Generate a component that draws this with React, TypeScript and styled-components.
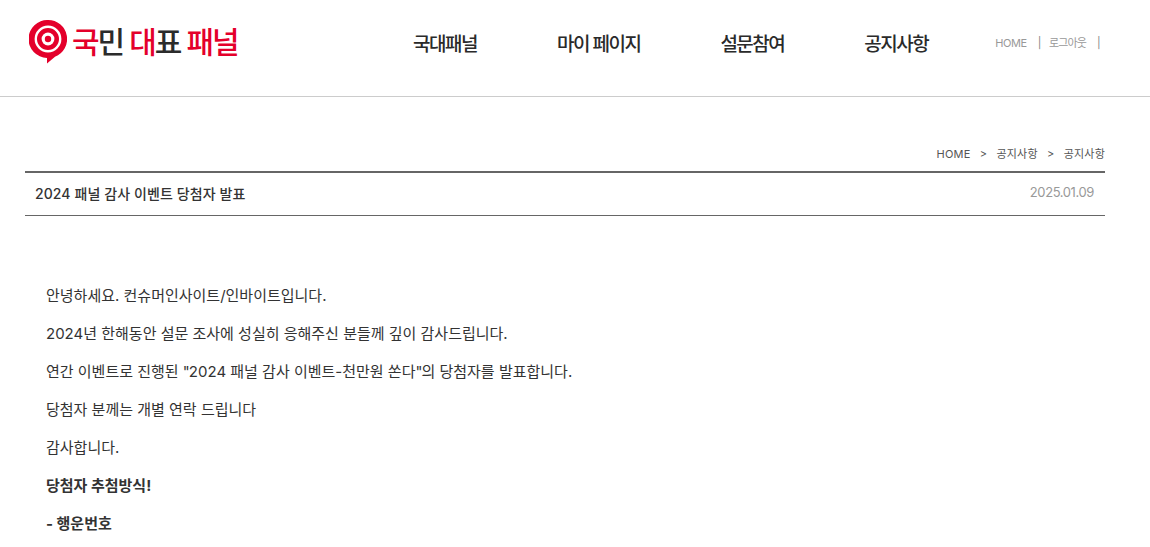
import styled, { createGlobalStyle } from 'styled-components'

const GlobalStyle = createGlobalStyle`
  html, body {
    margin: 0;
    padding: 0;
    height: 100%;
    overflow: hidden;
    background: #fff;
    font-family: Inter, 'Noto Sans CJK KR', sans-serif;
  }
`

const Header = styled.header`
  display: flex;
  align-items: flex-start;
  height: 96px;
  border-bottom: 1px solid #ccc;
`

const Logo = styled.div`
  display: flex;
  align-items: center;
  gap: 5px;
  width: 413px;
  padding: 20px 0 0 29px;
  box-sizing: border-box;
`

const LogoText = styled.div`
  font-size: 30px;
  line-height: 42px;
  font-weight: 500;
  letter-spacing: -2px;
  white-space: nowrap;
  color: #e4002b;
`

const Dark = styled.span`
  color: #2b2b2b;
`

const Nav = styled.nav`
  display: flex;
  gap: 80px;
  padding-top: 31px;
`

const NavItem = styled.a`
  font-size: 19px;
  line-height: 28px;
  font-weight: 500;
  letter-spacing: -1.5px;
  color: #2a2a2a;
`

const Util = styled.div`
  display: flex;
  align-items: center;
  margin-left: 67px;
  padding-top: 35px;
  font-size: 11px;
  line-height: 16px;
  letter-spacing: -0.4px;
  color: #999;
`

const UtilKo = styled.span`
  letter-spacing: -0.9px;
`

const Sep = styled.span`
  margin: 0 8px 0 11px;
  color: #888;
`

const Main = styled.main`
  width: 1080px;
  margin-left: 25px;
`

const Crumbs = styled.div`
  display: flex;
  justify-content: flex-end;
  gap: 9.25px;
  padding-top: 49px;
  height: 25px;
  font-size: 11px;
  line-height: 16px;
  letter-spacing: 0.2px;
  color: #555;
`

const TitleRow = styled.div`
  display: flex;
  align-items: center;
  justify-content: space-between;
  height: 42px;
  padding: 0 10px;
  border-top: 2px solid #666;
  border-bottom: 1px solid #666;
`

const Title = styled.h1`
  margin: 0 0 2px;
  font-size: 14px;
  font-weight: 500;
  letter-spacing: 0.1px;
  color: #333;
`

const DateText = styled.span`
  margin: 0 1px 4px 0;
  font-size: 13px;
  letter-spacing: -0.4px;
  color: #999;
`

const Body = styled.div`
  padding: 70px 0 0 21px;
`

const Para = styled.p<{ $bold?: boolean }>`
  margin: 0 0 19px;
  font-size: 15px;
  line-height: 19px;
  color: #333;
  font-weight: ${(p) => (p.$bold ? 700 : 400)};
`

const Quote = styled.span`
  letter-spacing: -1px;
`

const App = () => {
  return (
    <>
      <GlobalStyle />
      <Header>
        <Logo>
          <svg width="38" height="44" viewBox="0 0 38 44">
            <path
              d="M19 0a19 19 0 0 1 7 36.7L18 43.5v-5.5A19 19 0 0 1 19 0z"
              fill="#e4002b"
            />
            <circle cx="19" cy="19" r="12.2" fill="none" stroke="#fff" strokeWidth="2.4" />
            <circle cx="19" cy="19" r="6.4" fill="#fff" />
            <circle cx="19" cy="19" r="3.2" fill="#e4002b" />
          </svg>
          <LogoText>
            국<Dark>민</Dark> 대<Dark>표</Dark> 패널
          </LogoText>
        </Logo>
        <Nav>
          <NavItem>국대패널</NavItem>
          <NavItem>마이 페이지</NavItem>
          <NavItem>설문참여</NavItem>
          <NavItem>공지사항</NavItem>
        </Nav>
        <Util>
          <span>HOME</span>
          <Sep>|</Sep>
          <UtilKo>로그아웃</UtilKo>
          <Sep>|</Sep>
        </Util>
      </Header>
      <Main>
        <Crumbs>
          <span>HOME</span>
          <span>&gt;</span>
          <span>공지사항</span>
          <span>&gt;</span>
          <span>공지사항</span>
        </Crumbs>
        <TitleRow>
          <Title>2024 패널 감사 이벤트 당첨자 발표</Title>
          <DateText>2025.01.09</DateText>
        </TitleRow>
        <Body>
          <Para>안녕하세요. 컨슈머인사이트/인바이트입니다.</Para>
          <Para>2024년 한해동안 설문 조사에 성실히 응해주신 분들께 깊이 감사드립니다.</Para>
          <Para>
            연간 이벤트로 진행된 <Quote>"</Quote>2024 패널 감사 이벤트-천만원 쏜다<Quote>"</Quote>의 당첨자를 발표합니다.
          </Para>
          <Para>당첨자 분께는 개별 연락 드립니다</Para>
          <Para>감사합니다.</Para>
          <Para $bold>당첨자 추첨방식!</Para>
          <Para $bold>- 행운번호</Para>
        </Body>
      </Main>
    </>
  )
}

export default App
